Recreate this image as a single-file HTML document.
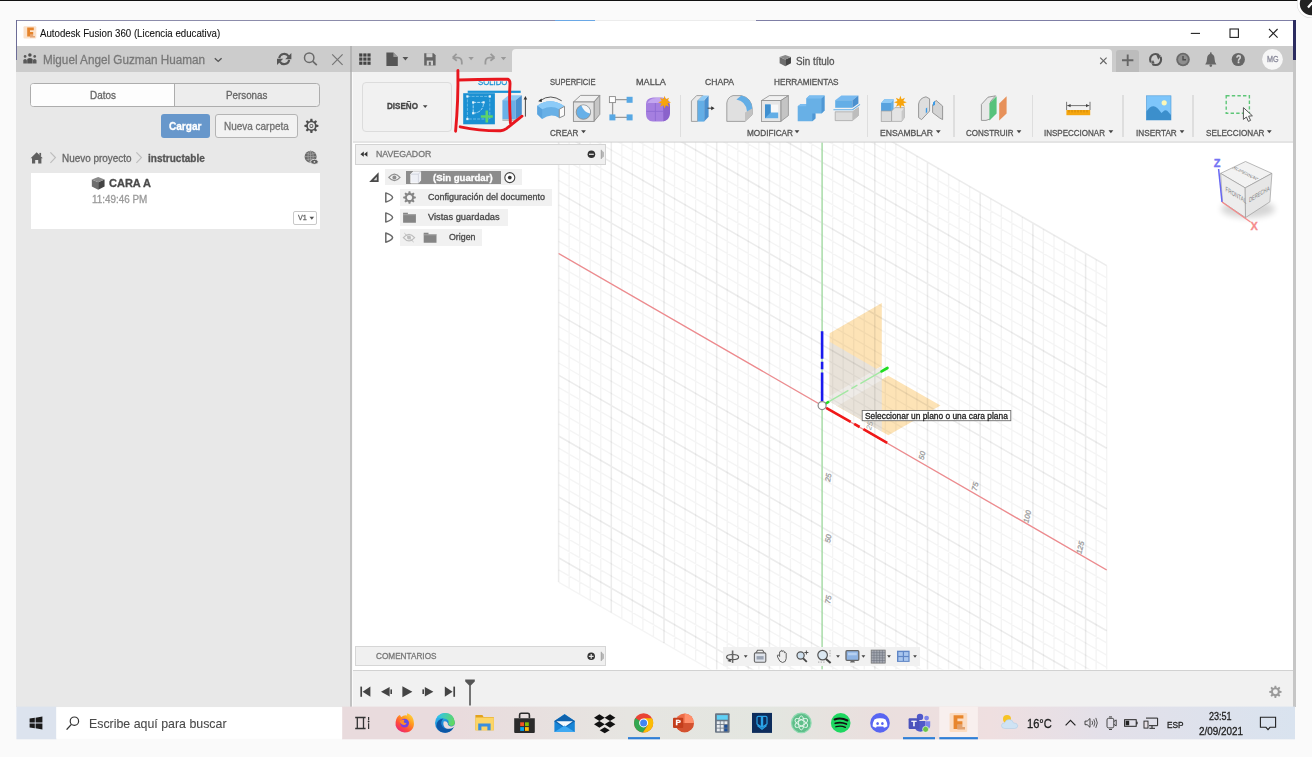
<!DOCTYPE html>
<html lang="es"><head><meta charset="utf-8"><title>Autodesk Fusion 360 (Licencia educativa)</title>
<style>
html,body{margin:0;padding:0}
body{width:1312px;height:757px;position:relative;overflow:hidden;background:#fafafa;font-family:"Liberation Sans",sans-serif}
.b{position:absolute;box-sizing:border-box}
.t{position:absolute;white-space:nowrap;transform-origin:0 50%;display:block;-webkit-text-stroke:0.3px currentColor}
svg{position:absolute;left:0;top:0}
#root{position:absolute;left:0;top:0;width:1312px;height:757px;overflow:hidden;filter:blur(0.45px)}
#txt{position:absolute;left:0;top:0;width:1312px;height:757px;}
</style></head><body>
<div id="root">
<div class="b" style="left:0px;top:0px;width:1312.00px;height:1.00px;background:#111;"></div>
<div class="b" style="left:16.4px;top:20.3px;width:1276.90px;height:25.70px;background:#ffffff;"></div>
<div class="b" style="left:16.4px;top:19.7px;width:538.60px;height:1.20px;background:#8c8cab;"></div>
<div class="b" style="left:555px;top:19.7px;width:40.00px;height:1.20px;background:#6aa8e6;"></div>
<div class="b" style="left:595px;top:19.7px;width:161.00px;height:1.20px;background:#ececec;"></div>
<div class="b" style="left:756px;top:19.7px;width:537.30px;height:1.20px;background:#7f7fa6;"></div>
<div class="b" style="left:16.4px;top:46px;width:1276.90px;height:26.20px;background:#cccccc;"></div>
<div class="b" style="left:15.7px;top:20.3px;width:1.20px;height:39.70px;background:#6c6c96;"></div>
<div class="b" style="left:16.4px;top:72.2px;width:334.60px;height:634.40px;background:#e8e8e8;"></div>
<div class="b" style="left:350.4px;top:46px;width:1.70px;height:26.20px;background:#b4b4b4;"></div>
<div class="b" style="left:350.4px;top:72.2px;width:1.70px;height:634.40px;background:#c2c2c2;"></div>
<div class="b" style="left:352.6px;top:72.2px;width:940.70px;height:68.80px;background:#f2f2f2;"></div>
<div class="b" style="left:352.6px;top:140.5px;width:940.70px;height:2.00px;background:#e4e4e4;"></div>
<div class="b" style="left:512px;top:48.6px;width:600.20px;height:23.90px;background:#f2f2f2;border-radius:4px 4px 0 0;"></div>
<div class="b" style="left:1116px;top:49.5px;width:23.00px;height:22.70px;background:#bcbcbc;border-radius:3px 3px 0 0;"></div>
<div class="b" style="left:352.6px;top:142.5px;width:940.70px;height:527.50px;background:#ffffff;"></div>
<div class="b" style="left:352.6px;top:669.6px;width:940.70px;height:1.80px;background:#d2d2d2;"></div>
<div class="b" style="left:352.6px;top:671.4px;width:940.70px;height:35.20px;background:#f1f1f1;"></div>
<div class="b" style="left:1293.3px;top:20.3px;width:2.70px;height:39.70px;background:#2c2c60;"></div>
<div class="b" style="left:1293.3px;top:60px;width:2.30px;height:646.60px;background:#c6c6c6;"></div>
<div class="b" style="left:30px;top:83px;width:290.40px;height:23.90px;background:#ededed;border:1.4px solid #adadad;border-radius:3.5px;"></div>
<div class="b" style="left:31.2px;top:84.2px;width:143.60px;height:21.50px;background:#fdfdfd;border-right:1.2px solid #adadad;border-radius:2px 0 0 2px;"></div>
<div class="b" style="left:161px;top:114.2px;width:48.70px;height:23.60px;background:#6797cb;border-radius:3px;"></div>
<div class="b" style="left:215px;top:114.2px;width:82.80px;height:23.60px;background:#f2f2f2;border:1px solid #b4b4b4;border-radius:3px;"></div>
<div class="b" style="left:30.7px;top:172.9px;width:289.70px;height:56.20px;background:#ffffff;"></div>
<div class="b" style="left:292.5px;top:210.7px;width:24.10px;height:14.00px;background:#ffffff;border:1px solid #c9c9c9;border-radius:2px;"></div>
<div class="b" style="left:361.5px;top:81.7px;width:90.50px;height:50.30px;background:#f1f1f1;border:1px solid #dcdcdc;border-radius:4px;"></div>
<div class="b" style="left:679.5px;top:95px;width:1.40px;height:41.50px;background:#dedede;"></div>
<div class="b" style="left:867.0px;top:95px;width:1.40px;height:41.50px;background:#dedede;"></div>
<div class="b" style="left:953.4px;top:95px;width:1.40px;height:41.50px;background:#dedede;"></div>
<div class="b" style="left:1031.5px;top:95px;width:1.40px;height:41.50px;background:#dedede;"></div>
<div class="b" style="left:1122.3px;top:95px;width:1.40px;height:41.50px;background:#dedede;"></div>
<div class="b" style="left:1192.2px;top:95px;width:1.40px;height:41.50px;background:#dedede;"></div>
<svg width="1312" height="757" viewBox="0 0 1312 757">
<defs><clipPath id="cv"><rect x="352.6" y="142.5" width="940.7" height="527.1"/></clipPath></defs>
<g clip-path="url(#cv)" fill="none">
<path d="M829.6 333.3L881.8 303.1V366L829.6 396.2Z" fill="#fde3b6" stroke="none"/>
<path d="M836 405.5L888.3 375.8L940.5 405.5L888.3 435.2Z" fill="#fde3b6" stroke="none"/>
<path d="M829.6 341.8L881.8 372V431.6L829.6 401.5Z" fill="#e8e2d9" stroke="none"/>
<path d="M829.6 396.2L881.8 366V380L837.4 405.9L829.6 401.5Z" fill="#eeebe7" stroke="none"/>
<path d="M569.14 -44.71V588.16M579.68 -38.62V594.24M590.22 -32.54V600.33M600.76 -26.45V606.41M621.84 -14.28V618.58M632.38 -8.20V624.67M642.92 -2.11V630.76M653.46 3.97V636.84M674.54 16.14V649.01M685.08 22.23V655.10M695.62 28.31V661.18M706.16 34.40V667.27M727.24 46.57V679.44M737.78 52.65V685.52M748.32 58.74V691.61M758.86 64.82V697.69M779.94 77.00V709.86M790.48 83.08V715.95M801.02 89.17V722.03M811.56 95.25V728.12M832.64 107.42V740.29M843.18 113.51V746.38M853.72 119.59V752.46M864.26 125.68V758.55M885.34 137.85V770.72M895.88 143.93V776.80M906.42 150.02V782.89M916.96 156.10V788.97M938.04 168.27V801.14M948.58 174.36V807.23M959.12 180.44V813.31M969.66 186.53V819.40M990.74 198.70V831.57M1001.28 204.79V837.65M1011.82 210.87V843.74M1022.36 216.96V849.82M1043.44 229.13V862.00M1053.98 235.21V868.08M1064.52 241.30V874.17M1075.06 247.38V880.25M1096.14 259.55V892.42M1106.68 265.64V898.51M558.60 -38.62L1106.68 277.81M558.60 -26.45L1106.68 289.98M558.60 -14.28L1106.68 302.15M558.60 -2.11L1106.68 314.32M558.60 22.23L1106.68 338.66M558.60 34.40L1106.68 350.83M558.60 46.57L1106.68 363.00M558.60 58.74L1106.68 375.17M558.60 83.08L1106.68 399.51M558.60 95.25L1106.68 411.69M558.60 107.42L1106.68 423.86M558.60 119.59L1106.68 436.03M558.60 143.93L1106.68 460.37M558.60 156.10L1106.68 472.54M558.60 168.27L1106.68 484.71M558.60 180.44L1106.68 496.88M558.60 204.79L1106.68 521.22M558.60 216.96L1106.68 533.39M558.60 229.13L1106.68 545.56M558.60 241.30L1106.68 557.73M558.60 265.64L1106.68 582.07M558.60 277.81L1106.68 594.24M558.60 289.98L1106.68 606.41M558.60 302.15L1106.68 618.58M558.60 326.49L1106.68 642.93M558.60 338.66L1106.68 655.10M558.60 350.83L1106.68 667.27M558.60 363.00L1106.68 679.44M558.60 387.34L1106.68 703.78M558.60 399.51L1106.68 715.95M558.60 411.69L1106.68 728.12M558.60 423.86L1106.68 740.29M558.60 448.20L1106.68 764.63M558.60 460.37L1106.68 776.80M558.60 472.54L1106.68 788.97M558.60 484.71L1106.68 801.14M558.60 509.05L1106.68 825.48M558.60 521.22L1106.68 837.65M558.60 533.39L1106.68 849.82M558.60 545.56L1106.68 862.00M558.60 569.90L1106.68 886.34M558.60 582.07L1106.68 898.51" stroke="#000" stroke-opacity="0.042" stroke-width="1.4"/>
<path d="M558.60 -50.80V582.07M611.30 -20.37V612.50M664.00 10.06V642.93M716.70 40.48V673.35M769.40 70.91V703.78M822.10 101.34V734.20M874.80 131.76V764.63M927.50 162.19V795.06M980.20 192.62V825.48M1032.90 223.04V855.91M1085.60 253.47V886.34M558.60 -50.80L1106.68 265.64M558.60 10.06L1106.68 326.49M558.60 70.91L1106.68 387.34M558.60 131.76L1106.68 448.20M558.60 192.62L1106.68 509.05M558.60 253.47L1106.68 569.90M558.60 314.32L1106.68 630.76M558.60 375.17L1106.68 691.61M558.60 436.03L1106.68 752.46M558.60 496.88L1106.68 813.31M558.60 557.73L1106.68 874.17" stroke="#000" stroke-opacity="0.075" stroke-width="1.6"/>
<path d="M822.10 142.5V669.6" stroke="#9bdc9b" stroke-width="1.2"/>
<path d="M558.60 253.47L1106.68 569.90" stroke="#f0868a" stroke-width="1.2"/>
<text x="869.3" y="428.2" font-family="Liberation Sans, sans-serif" font-style="italic" font-size="7.5" fill="#9a9a9a" stroke="none" text-anchor="middle" transform="rotate(-76 869.3 425.5)">25</text>
<path d="M827.6 402.4L884 369.9" stroke="#a3e8a3" stroke-width="1.4" stroke-dasharray="24 3.4 7 3.4 30"/>
<path d="M881.6 371.4L887.4 368" stroke="#22dd22" stroke-width="2.8" stroke-linecap="round"/>
<path d="M825 404L829 401.6" stroke="#22dd22" stroke-width="2.4"/>
<path d="M822.1 331.2V358.7M822.1 361.8V369.2M822.1 372.4V401" stroke="#1a1aee" stroke-width="2.6"/>
<path d="M826.1 407.9L850.7 421.9M854.2 423.9L859.6 427M863.4 429.2L887.2 442.8" stroke="#f01818" stroke-width="2.6"/>
<circle cx="822.1" cy="405.6" r="4" fill="#ffffff" stroke="#8a8a8a" stroke-width="1.2"/>
</g>
<rect x="862.2" y="410.5" width="148.6" height="10.2" fill="#ffffff" stroke="#6e6e6e" stroke-width="0.9"/>
<g>
<defs><filter id="vb" x="-30%" y="-60%" width="160%" height="220%"><feGaussianBlur stdDeviation="3.2"/></filter></defs><ellipse cx="1248" cy="209" rx="27" ry="9" fill="#000" opacity="0.16" filter="url(#vb)"/>
<path d="M1220.6 173.4L1245.5 161.5L1271.9 173.4L1245.2 187.9Z" fill="#f2f2f2" stroke="#9c9c9c" stroke-width="0.7"/>
<path d="M1220.6 173.4L1245.2 187.9L1245.5 217.6L1222.4 202Z" fill="#ededed" stroke="#9c9c9c" stroke-width="0.7"/>
<path d="M1245.2 187.9L1271.9 173.4L1269.9 201.8L1245.5 217.6Z" fill="#e6e6e6" stroke="#9c9c9c" stroke-width="0.7"/>
<path d="M1218.6 169L1222 202" stroke="#6666f2" stroke-width="1.5"/>
<path d="M1222 202L1250.5 222" stroke="#f48a8a" stroke-width="1.3"/>
</g>
</svg>
<div class="b" style="left:355px;top:144.4px;width:250.50px;height:20.40px;background:#f0f0f0;border:1px solid #d3d3d3;"></div>
<div class="b" style="left:385.2px;top:168.8px;width:136.70px;height:16.50px;background:#f0f0f0;"></div>
<div class="b" style="left:406.2px;top:170.7px;width:94.70px;height:13.20px;background:#8c8c8c;"></div>
<div class="b" style="left:400.3px;top:189.3px;width:151.70px;height:16.40px;background:#f1f1f1;"></div>
<div class="b" style="left:400.3px;top:209.3px;width:108.10px;height:16.40px;background:#f1f1f1;"></div>
<div class="b" style="left:400.3px;top:229.4px;width:82.20px;height:16.40px;background:#f1f1f1;"></div>
<div class="b" style="left:355px;top:646px;width:250.50px;height:20.40px;background:#f0f0f0;border:1px solid #d6d6d6;"></div>
<div class="b" style="left:723.4px;top:647px;width:197.00px;height:19.00px;background:#f1f1f1;"></div>
<svg width="1312" height="757" viewBox="0 0 1312 757">
<rect x="23.5" y="26.2" width="12.8" height="12.4" rx="1" fill="#fbe2cb"/>
<path d="M27.2 27.6H33.8V30.2H30V32H33.2V34.4H30V36.6H27.2Z" fill="#e5842c"/>
<path d="M30 34.4H33.2V36H35V37.4H30Z" fill="#d2691e" opacity=".5"/>
<path d="M1190.8 33.4H1200" stroke="#222" stroke-width="1.1"/>
<rect x="1230" y="29" width="8.4" height="8.4" fill="none" stroke="#222" stroke-width="1.1"/>
<path d="M1269 29L1277.6 37.6M1277.6 29L1269 37.6" stroke="#222" stroke-width="1.1"/>
<circle cx="1311.2" cy="3.8" r="14.3" fill="#d8d8d8"/><circle cx="1311.2" cy="3.8" r="13.8" fill="#fff"/><circle cx="1311.2" cy="3.8" r="11.4" fill="#222"/>
<path d="M1308 7.4L1312.4 2.4" stroke="#fff" stroke-width="2.2"/>
<circle cx="25.1" cy="56.4" r="1.35" fill="#5a5a5a"/>
<path d="M23.30 63.5V60.50Q23.30 58.90 25.10 58.90Q26.90 58.90 26.90 60.50V63.5Z" fill="#5a5a5a"/>
<circle cx="34.7" cy="56.4" r="1.35" fill="#5a5a5a"/>
<path d="M32.90 63.5V60.50Q32.90 58.90 34.70 58.90Q36.50 58.90 36.50 60.50V63.5Z" fill="#5a5a5a"/>
<circle cx="29.9" cy="55" r="1.75" fill="#4f4f4f"/>
<path d="M27.20 63.5V59.60Q27.20 58.00 29.90 58.00Q32.60 58.00 32.60 59.60V63.5Z" fill="#4f4f4f"/>
<path d="M214.8 58.2L218.2 61.4L221.6 58.2" fill="none" stroke="#555" stroke-width="1.4"/>
<path d="M279.2 58.2A5.1 5.1 0 0 1 288.6 56.4" fill="none" stroke="#555" stroke-width="2.1"/>
<path d="M289.2 59.8A5.1 5.1 0 0 1 279.8 61.6" fill="none" stroke="#555" stroke-width="2.1"/>
<path d="M291.4 53V59.2H285.2Z" fill="#555"/>
<path d="M277 65V58.8H283.2Z" fill="#555"/>
<circle cx="309.2" cy="57.7" r="4.7" fill="none" stroke="#6a6a6a" stroke-width="1.5"/><path d="M312.6 61.2L316.8 65.2" stroke="#6a6a6a" stroke-width="1.7"/>
<path d="M332.2 54.4L342.6 64.8M342.6 54.4L332.2 64.8" stroke="#757575" stroke-width="1.2"/>
<rect x="359.2" y="53.4" width="3.2" height="3.2" fill="#444"/>
<rect x="363.3" y="53.4" width="3.2" height="3.2" fill="#444"/>
<rect x="367.4" y="53.4" width="3.2" height="3.2" fill="#444"/>
<rect x="359.2" y="57.5" width="3.2" height="3.2" fill="#444"/>
<rect x="363.3" y="57.5" width="3.2" height="3.2" fill="#444"/>
<rect x="367.4" y="57.5" width="3.2" height="3.2" fill="#444"/>
<rect x="359.2" y="61.6" width="3.2" height="3.2" fill="#444"/>
<rect x="363.3" y="61.6" width="3.2" height="3.2" fill="#444"/>
<rect x="367.4" y="61.6" width="3.2" height="3.2" fill="#444"/>
<path d="M386.4 52.6H393.4L397.8 57V66H386.4Z" fill="#555"/><path d="M393.4 52.6V57H397.8Z" fill="#999"/>
<path d="M402.50 57.10H408.30L405.40 60.50Z" fill="#555"/>
<path d="M424.2 53.2H433.6L435.6 55.2V65.4H424.2Z" fill="#666"/><rect x="426.4" y="53.2" width="6" height="4" fill="#cfcfcf"/><rect x="426.8" y="60.6" width="6.2" height="4.8" fill="#cfcfcf"/><rect x="428.8" y="61.8" width="2" height="3.6" fill="#666"/>
<path d="M452.6 57.6L456.6 53.8M452.6 57.6L456.8 60.8M452.8 57.6H458Q461.6 57.8 461.8 62V64.6" fill="none" stroke="#999" stroke-width="1.8"/>
<path d="M468.40 57.00H473.80L471.10 60.20Z" fill="#999"/>
<path d="M494.6 57.6L490.6 53.8M494.6 57.6L490.4 60.8M494.4 57.6H489.2Q485.6 57.8 485.4 62V64.6" fill="none" stroke="#999" stroke-width="1.8"/>
<path d="M500.80 57.00H506.20L503.50 60.20Z" fill="#999"/>
<path d="M779.63 57.03L785.30 59.55V66.27L779.63 63.33Z" fill="#6e6e6e"/>
<path d="M790.97 57.03L785.30 59.55V66.27L790.97 63.33Z" fill="#444"/>
<path d="M779.63 57.03L785.30 54.93L790.97 57.03L785.30 59.55Z" fill="#8a8a8a"/>
<path d="M1100.2 57.6L1106.6 64M1106.6 57.6L1100.2 64" stroke="#666" stroke-width="1.1"/>
<path d="M1122 60.3H1133.4M1127.7 54.6V66" stroke="#666" stroke-width="1.9"/>
<circle cx="1155.6" cy="59.5" r="5.5" fill="none" stroke="#555" stroke-width="2.1"/>
<path d="M1157 58L1161.4 51.4L1164.4 55.6Z" fill="#cccccc"/><path d="M1153.6 61.6L1150.6 67.2L1147.4 63.8Z" fill="#cccccc"/>
<path d="M1156.2 54.6L1161 55.6L1158.2 59.8Z" fill="#555"/><path d="M1151 63.4L1154.6 63.2L1153 60Z" fill="#555"/>
<circle cx="1183" cy="59.5" r="6.8" fill="#6a6a6a"/><circle cx="1183" cy="59.5" r="4.9" fill="#8e8e8e"/><path d="M1183 56V59.8H1186" fill="none" stroke="#4e4e4e" stroke-width="1.4"/>
<path d="M1205.2 64.4Q1207 62.6 1207 59Q1207.2 54.4 1210.8 53.6Q1214.4 54.4 1214.6 59Q1214.6 62.6 1216.4 64.4Z" fill="#666"/><circle cx="1210.8" cy="65.6" r="1.3" fill="#666"/><circle cx="1210.8" cy="53.2" r="0.9" fill="#666"/>
<circle cx="1238.3" cy="59.5" r="6.6" fill="#666"/>
<circle cx="1272.5" cy="59.3" r="10.4" fill="#f6f6f6"/>
<path d="M318.43 124.93L318.43 126.87L316.34 127.20L315.81 128.48L317.06 130.19L315.69 131.56L313.98 130.31L312.70 130.84L312.37 132.93L310.43 132.93L310.10 130.84L308.82 130.31L307.11 131.56L305.74 130.19L306.99 128.48L306.46 127.20L304.37 126.87L304.37 124.93L306.46 124.60L306.99 123.32L305.74 121.61L307.11 120.24L308.82 121.49L310.10 120.96L310.43 118.87L312.37 118.87L312.70 120.96L313.98 121.49L315.69 120.24L317.06 121.61L315.81 123.32L316.34 124.60Z" fill="#4e4e4e"/><circle cx="311.4" cy="125.9" r="3.55" fill="#e8e8e8"/><circle cx="311.4" cy="125.9" r="1.99" fill="#4e4e4e"/><circle cx="311.4" cy="125.9" r="1.14" fill="#e8e8e8"/>
<g transform="translate(0 0.7)"><path d="M30.6 157.6L36.7 151.6L42.8 157.6H41.4V162.8H38.2V159.2H35.2V162.8H32V157.6Z" fill="#606060"/><rect x="39.4" y="152.2" width="1.7" height="3" fill="#606060"/></g>
<path d="M50.4 152.4L55.4 157.6L50.4 162.8" fill="none" stroke="#bdbdbd" stroke-width="1.2"/>
<path d="M136.4 152.4L141.4 157.6L136.4 162.8" fill="none" stroke="#bdbdbd" stroke-width="1.2"/>
<circle cx="310.6" cy="156.8" r="6" fill="#6a6a6a"/><path d="M305 156.6H316.2M310.6 151V162.2M306.4 153.4Q310.6 155.4 314.8 153.4M306.4 159.8Q310.6 157.8 314.8 159.8" stroke="#a8a8a8" stroke-width="0.7" fill="none"/><ellipse cx="310.6" cy="156.6" rx="2.6" ry="5.6" fill="none" stroke="#a8a8a8" stroke-width="0.7"/>
<ellipse cx="314.4" cy="161.8" rx="3.8" ry="2.5" fill="#5a5a5a" stroke="#e8e8e8" stroke-width="0.8"/><circle cx="314.4" cy="161.8" r="0.9" fill="#ddd"/>
<path d="M91.83 179.39L98.20 182.22V189.77L91.83 186.47Z" fill="#6e6e6e"/>
<path d="M104.57 179.39L98.20 182.22V189.77L104.57 186.47Z" fill="#444"/>
<path d="M91.83 179.39L98.20 177.03L104.57 179.39L98.20 182.22Z" fill="#8a8a8a"/>
<path d="M309.50 216.70H314.10L311.80 219.70Z" fill="#555"/>
<path d="M360.4 151.6L363.8 154.2L360.4 156.8ZM364 151.6L367.4 154.2L364 156.8Z" fill="#333" transform="rotate(180 363.9 154.2)"/>
<circle cx="591.4" cy="154.3" r="3.8" fill="#333"/><rect x="589" y="153.7" width="4.8" height="1.2" fill="#e8e8e8"/>
<path d="M601 149.8V159L604 156.6V152.2Z" fill="#b9b9b9"/><path d="M601.2 149.8V159" stroke="#999" stroke-width="0.7"/>
<path d="M369.2 182H378.6V172.2Z" fill="#4a4a4a"/><path d="M373.6 180.2H376.8V176.8Z" fill="#d8d8d8"/>
<path d="M388.79999999999995 177.4Q394.4 170.8 400.0 177.4Q394.4 184.0 388.79999999999995 177.4Z" fill="none" stroke="#8e8e8e" stroke-width="1.2"/><circle cx="394.4" cy="177.4" r="2" fill="#8e8e8e"/>
<path d="M410.8 174.2L413 171.8H420.6V180.4L418.4 183H410.8Z" fill="#eef0f6" stroke="#fff" stroke-width="0.8"/><path d="M410.8 174.2H418.4V183M418.4 174.2L420.6 171.8" fill="none" stroke="#c9ccd6" stroke-width="0.7"/>
<circle cx="509.8" cy="177.6" r="5" fill="#fff" stroke="#444" stroke-width="1.1"/><circle cx="509.8" cy="177.6" r="1.9" fill="#333"/>
<path d="M385.8 192.9V202.1Q392.2 199.9 392.6 197.5Q392.2 195.1 385.8 192.9Z" fill="#fff" stroke="#6a6a6a" stroke-width="1.5" stroke-linejoin="round"/>
<path d="M385.8 212.9V222.1Q392.2 219.9 392.6 217.5Q392.2 215.1 385.8 212.9Z" fill="#fff" stroke="#6a6a6a" stroke-width="1.5" stroke-linejoin="round"/>
<path d="M385.8 233.0V242.2Q392.2 240.0 392.6 237.6Q392.2 235.2 385.8 233.0Z" fill="#fff" stroke="#6a6a6a" stroke-width="1.5" stroke-linejoin="round"/>
<path d="M415.84 196.63L415.84 198.37L413.96 198.67L413.48 199.83L414.60 201.37L413.37 202.60L411.83 201.48L410.67 201.96L410.37 203.84L408.63 203.84L408.33 201.96L407.17 201.48L405.63 202.60L404.40 201.37L405.52 199.83L405.04 198.67L403.16 198.37L403.16 196.63L405.04 196.33L405.52 195.17L404.40 193.63L405.63 192.40L407.17 193.52L408.33 193.04L408.63 191.16L410.37 191.16L410.67 193.04L411.83 193.52L413.37 192.40L414.60 193.63L413.48 195.17L413.96 196.33Z" fill="#858585"/><circle cx="409.5" cy="197.5" r="2.56" fill="#f1f1f1"/>
<path d="M403.1 212.7H407.9V214.1H415.9V222.7H403.1Z" fill="#858585"/><path d="M403.1 214.7H415.9" stroke="#b3b3b3" stroke-width="0.8"/>
<path d="M423.70000000000005 232.8H428.5V234.20000000000002H436.5V242.8H423.70000000000005Z" fill="#858585"/><path d="M423.70000000000005 234.8H436.5" stroke="#b3b3b3" stroke-width="0.8"/>
<path d="M403.4 237.6Q409 231.0 414.6 237.6Q409 244.2 403.4 237.6Z" fill="none" stroke="#bdbdbd" stroke-width="1.2"/><circle cx="409" cy="237.6" r="2" fill="#bdbdbd"/>
<path d="M404.4 233.2L413.6 242" stroke="#bdbdbd" stroke-width="1"/>
<circle cx="591.2" cy="656.3" r="3.8" fill="#333"/><path d="M588.8 656.3H593.6M591.2 653.9V658.7" stroke="#e8e8e8" stroke-width="1.2"/>
<path d="M601 651.8V661L604 658.6V654.2Z" fill="#b9b9b9"/><path d="M601.2 651.8V661" stroke="#999" stroke-width="0.7"/>
<path d="M361.2 686.6V696.8" stroke="#444" stroke-width="1.7"/><path d="M370.4 686.6V696.8L362.6 691.7Z" fill="#444"/>
<path d="M389.6 687V696.4L381 691.7Z" fill="#444"/><rect x="390.4" y="689.4" width="1.6" height="4.6" fill="#444"/>
<path d="M402.4 686.2V697.2L412.4 691.7Z" fill="#444"/>
<path d="M424.8 687V696.4L433.4 691.7Z" fill="#444"/><rect x="422.4" y="689.4" width="1.6" height="4.6" fill="#444"/>
<path d="M454.2 686.6V696.8" stroke="#444" stroke-width="1.7"/><path d="M444.8 686.6V696.8L452.6 691.7Z" fill="#444"/>
<path d="M465.2 679.6H474.8V681.6L470.8 685.6V705.4H469.2V685.6L465.2 681.6Z" fill="#555"/>
<path d="M1281.54 690.96L1281.54 692.64L1279.72 692.93L1279.25 694.05L1280.34 695.55L1279.15 696.74L1277.65 695.65L1276.53 696.12L1276.24 697.94L1274.56 697.94L1274.27 696.12L1273.15 695.65L1271.65 696.74L1270.46 695.55L1271.55 694.05L1271.08 692.93L1269.26 692.64L1269.26 690.96L1271.08 690.67L1271.55 689.55L1270.46 688.05L1271.65 686.86L1273.15 687.95L1274.27 687.48L1274.56 685.66L1276.24 685.66L1276.53 687.48L1277.65 687.95L1279.15 686.86L1280.34 688.05L1279.25 689.55L1279.72 690.67Z" fill="#9a9a9a"/><circle cx="1275.4" cy="691.8" r="2.48" fill="#f1f1f1"/>
<rect x="467.7" y="90.7" width="53" height="2.2" fill="#1b93d6"/>
<rect x="463.2" y="93.2" width="31.7" height="31.1" fill="#1b90d2"/>
<rect x="467.4" y="96.4" width="22.4" height="22.6" fill="none" stroke="#6fbde9" stroke-width="0.9" stroke-dasharray="3 1.2"/>
<rect x="466.29999999999995" y="95.30000000000001" width="2.2" height="2.2" fill="#e6f3fb"/>
<rect x="488.7" y="95.30000000000001" width="2.2" height="2.2" fill="#e6f3fb"/>
<rect x="466.29999999999995" y="117.9" width="2.2" height="2.2" fill="#e6f3fb"/>
<path d="M473.2 102.4H483.6Q483.2 112.6 473.2 113.2Z" fill="none" stroke="#a9d9f4" stroke-width="1" stroke-dasharray="3 1"/>
<rect x="472.09999999999997" y="101.30000000000001" width="2.2" height="2.2" fill="#e6f3fb"/>
<rect x="482.5" y="101.30000000000001" width="2.2" height="2.2" fill="#e6f3fb"/>
<rect x="472.09999999999997" y="112.10000000000001" width="2.2" height="2.2" fill="#e6f3fb"/>
<path d="M486.8 110.4V122.6M480.8 116.5H492.8" stroke="#5fd36a" stroke-width="2.6"/>
<path d="M502.4 100.2L508.6 95.2H521.8L515.6 100.2Z" fill="#8fcaf5"/>
<path d="M502.4 100.2H515.6V119.4H502.4Z" fill="#6ab0e8"/>
<path d="M515.6 100.2L521.8 95.2V114.6L515.6 119.4Z" fill="#4a90cf"/>
<rect x="502.4" y="119.4" width="13.2" height="1.6" fill="#b9b9b9"/>
<path d="M525.4 98V116.6" stroke="#333" stroke-width="0.9"/><path d="M523.6 99.6L525.4 96L527.2 99.6Z" fill="#333"/>
<path d="M537.3 105.7L537.3 114.2L542.2 119.1Q550.7 112.4 559.3 117.9L564.5 115.5V106.3Q550.1 96.4 537.3 105.7Z" fill="#68b0e6"/>
<path d="M537.3 105.7Q550.1 96.4 564.5 106.3L559.3 109.3Q551.3 104.6 542.2 109.3Z" fill="#8ccbf8"/>
<path d="M537.3 105.7L542.2 109.3V119.1L537.3 114.2Z" fill="#5aa4de"/>
<path d="M559.3 109.3L564.5 106.3V115.5L559.3 117.9Z" fill="#fafafa" stroke="#8e8e8e" stroke-width="1"/>
<path d="M540.6 100.4Q550.4 93.4 561.7 100.8" fill="none" stroke="#444" stroke-width="0.9"/><path d="M538.2 101.2L541.6 98.6L541.8 102Z" fill="#222"/>
<path d="M573.4 102L580.6 95.4H599.8L594 102Z" fill="#f1f1f1" stroke="#8e8e8e" stroke-width="0.9"/>
<path d="M594 102L599.8 95.4V114.4L594 121.4Z" fill="#c6c6c6" stroke="#8e8e8e" stroke-width="0.9"/>
<rect x="573.4" y="102" width="20.6" height="19.4" fill="#e3e3e3" stroke="#8e8e8e" stroke-width="0.9"/>
<circle cx="583.4" cy="112.1" r="7.2" fill="#66b0e8" stroke="#8e8e8e" stroke-width="0.9"/><path d="M581.4 105.6A6.8 6.8 0 0 1 590 113.6Q583.6 112 581.4 105.6Z" fill="#f6f6f6"/>
<path d="M612.6 99.6H629M612.6 99.6V117.4M612.6 117.4H629" fill="none" stroke="#9a9a9a" stroke-width="1.3"/>
<rect x="609.4" y="96.6" width="6" height="6" fill="#fff" stroke="#8a8a8a" stroke-width="0.9"/>
<rect x="626.6" y="96.8" width="6" height="6" fill="#57a8e4"/>
<rect x="609.4" y="114.4" width="6" height="6" fill="#57a8e4"/>
<rect x="626.6" y="114.4" width="6" height="6" fill="#57a8e4"/>
<path d="M646 104Q646 98 653 97.4H662Q670 98 670 105V113Q669.4 121 662 121.6H653Q646 121 646 114Z" fill="#a57fe0"/>
<path d="M663 100Q670 101 670 107V113Q669.4 120 663.4 121.4Z" fill="#8a62cb"/>
<path d="M647 104Q649 98.4 656 98H663L661 103H648Z" fill="#c3a6ef"/>
<path d="M655.4 103V121M646.4 111.4H663" stroke="#8f6cd2" stroke-width="0.9"/>
<path d="M664.60 95.80L665.82 99.24L669.13 97.67L667.56 100.98L671.00 102.20L667.56 103.42L669.13 106.73L665.82 105.16L664.60 108.60L663.38 105.16L660.07 106.73L661.64 103.42L658.20 102.20L661.64 100.98L660.07 97.67L663.38 99.24Z" fill="#f7a40c"/>
<path d="M691.4 101L696.6 95.6H703L697.6 101V121.4H691.4Z" fill="#e9e9e9" stroke="#8e8e8e" stroke-width="0.8"/>
<path d="M697.6 100.4L702.8 95.6H708.6L703.8 100.4Z" fill="#8fcaf5"/><rect x="697.6" y="100.4" width="6.6" height="21.2" fill="#63aee6"/><path d="M704.2 100.4L708.6 95.6V116.8L704.2 121.6Z" fill="#4a90cf"/>
<path d="M707.6 108.2H712.4" stroke="#444" stroke-width="1"/><path d="M711.2 106.2L714.6 108.2L711.2 110.2Z" fill="#333"/>
<path d="M726.8 121.4V103Q727.6 97 733 95.6H741.4Q751.4 98 752.2 108.4V114.6L745 121.4Z" fill="#e0e0e0" stroke="#8e8e8e" stroke-width="0.8"/>
<path d="M745 121.4V112.6L752.2 108V114.6Z" fill="#c2c2c2"/>
<path d="M741.4 95.6Q751.4 98 752.2 108.4L747 111.4Q746.2 101.6 736.4 99.6Z" fill="#63aee6"/>
<path d="M761.4 100.6L769.4 95.6H788.4L780.8 100.6Z" fill="#f1f1f1" stroke="#8e8e8e" stroke-width="0.8"/>
<path d="M780.8 100.6L788.4 95.6V115.6L780.8 121.4Z" fill="#c4c4c4" stroke="#8e8e8e" stroke-width="0.8"/>
<rect x="761.4" y="100.6" width="19.4" height="20.8" fill="#e6e6e6" stroke="#8e8e8e" stroke-width="0.8"/>
<rect x="765" y="104.6" width="13.2" height="13.6" fill="#f8f8f8"/>
<path d="M765 104.6H770.6V112.6H778.2V118.2H765Z" fill="#63aee6"/><path d="M765 104.6H770.6V112.6L765 118.2Z" fill="#3f8fcf"/>
<path d="M797.7 106.3L800.7 103.9H806.2V98.4L809.3 95.6H824.5V110.6L821.5 113.4H815.4V118.5L812.3 121.2H797.7Z" fill="#68b0e6"/>
<path d="M821.5 98.4L824.5 95.6V110.6L821.5 113.4Z" fill="#4f97d4"/><path d="M812.3 113.4H815.4V118.5L812.3 121.2Z" fill="#4f97d4"/>
<path d="M806.2 98.4L809.3 95.6H824.5L821.5 98.4Z" fill="#7cbdf0"/><path d="M797.7 106.3L800.7 103.9H806.2V106.3Z" fill="#7cbdf0"/>
<path d="M835.2 100.2L841.4 95.6H858.4L852.4 100.2Z" fill="#78baf0"/><rect x="835.2" y="100.2" width="17.2" height="7.6" fill="#63aee6"/><path d="M852.4 100.2L858.4 95.6V103.6L852.4 107.8Z" fill="#4a90cf"/>
<path d="M835.2 111.8H852.4L858.4 107.6V115.6L852.4 120.6H835.2Z" fill="#dcdcdc" stroke="#a0a0a0" stroke-width="0.7"/><path d="M852.4 111.8L858.4 107.6V115.6L852.4 120.6Z" fill="#bdbdbd"/>
<path d="M833.4 109.8H852.6L860 104.4" fill="none" stroke="#63aee6" stroke-width="1.1"/>
<path d="M881.2 103L884.4 99.2H893.6V111H881.2Z" fill="#63aee6"/><path d="M881.2 103H891V111H881.2Z" fill="#57a2de"/><path d="M881.2 103L884.4 99.2H894L891 103Z" fill="#8fcaf5"/>
<rect x="881.2" y="111" width="10.4" height="10.4" fill="#dcdcdc" stroke="#a0a0a0" stroke-width="0.7"/>
<path d="M891.6 111L894.8 107.6H904.4V117.6L901.6 121.4H891.6Z" fill="#e4e4e4" stroke="#a0a0a0" stroke-width="0.7"/><path d="M901.6 111.4L904.4 107.6V117.6L901.6 121.4Z" fill="#c9c9c9"/>
<path d="M900.40 95.80L901.62 99.24L904.93 97.67L903.36 100.98L906.80 102.20L903.36 103.42L904.93 106.73L901.62 105.16L900.40 108.60L899.18 105.16L895.87 106.73L897.44 103.42L894.00 102.20L897.44 100.98L895.87 97.67L899.18 99.24Z" fill="#f7a40c"/>
<path d="M918.6 104Q919.6 98 926 96.8L929.6 98.8V111L921.6 119.6L918.6 117.6Z" fill="#dedede" stroke="#8e8e8e" stroke-width="0.9"/>
<path d="M932.6 105L936 100.4L942.6 106V119.6L939.4 117.8L932.6 112.6Z" fill="#d4d4d4" stroke="#8e8e8e" stroke-width="0.9"/>
<path d="M925.8 108.6L927.2 107.4V112L925.8 113.4Z" fill="#3a9be8"/><path d="M933 102.6L935 100.8V104.8L933 106Z" fill="#3a9be8"/>
<path d="M981.4 104.4L988 97.2L995.6 95.8L990.6 101.4V118.8L986 120.4H981.4Z" fill="#e8e8e8" stroke="#909090" stroke-width="0.9"/>
<path d="M989.4 103.2L996.6 96.2V113.4L989.4 120.4Z" fill="#57c27b"/>
<path d="M999.2 103.6L1006.6 96.2V113.6L999.2 120.6Z" fill="#e7915a"/>
<path d="M1066.6 101.8V110M1090 101.8V110M1067.2 105.6H1089.4" stroke="#555" stroke-width="0.8" fill="none"/><path d="M1067.4 105.6L1070.6 104V107.2ZM1089.2 105.6L1086 104V107.2Z" fill="#444"/>
<rect x="1066.4" y="110" width="23.8" height="5.2" fill="#f5a60f"/><path d="M1069 110V112.4M1072 110V112.4M1075 110V112.4M1078 110V112.4M1081 110V112.4M1084 110V112.4M1087 110V112.4" stroke="#b87400" stroke-width="0.6"/>
<rect x="1146.4" y="95.8" width="24.6" height="24.2" fill="#7ec6fb" stroke="#4f9bd8" stroke-width="0.6"/>
<path d="M1146.4 111.4Q1150 106 1153.6 106.2Q1157 106.4 1161.4 113L1164.4 110.6Q1165.8 109.6 1167.2 110.8L1171 115V120H1146.4Z" fill="#3c8fcc"/>
<circle cx="1164.2" cy="102.8" r="2.6" fill="#fbf7b8"/>
<rect x="1226.2" y="95.8" width="23.2" height="17.4" fill="none" stroke="#5ec678" stroke-width="1.4" stroke-dasharray="3.4 2.2"/>
<path d="M1243.4 107.6V119.4L1246.4 117L1248.4 121.4L1250.6 120.4L1248.6 116.2L1252.4 115.8Z" fill="#fafafa" stroke="#555" stroke-width="1"/>
<path d="M581.10 130.30H585.90L583.50 133.30Z" fill="#444"/>
<path d="M794.60 130.30H799.40L797.00 133.30Z" fill="#444"/>
<path d="M935.90 130.30H940.70L938.30 133.30Z" fill="#444"/>
<path d="M1016.60 130.30H1021.40L1019.00 133.30Z" fill="#444"/>
<path d="M1108.50 130.30H1113.30L1110.90 133.30Z" fill="#444"/>
<path d="M1179.60 130.30H1184.40L1182.00 133.30Z" fill="#444"/>
<path d="M1266.90 130.30H1271.70L1269.30 133.30Z" fill="#444"/>
<path d="M422.90 105.20H427.50L425.20 108.00Z" fill="#444"/>
<ellipse cx="732.6" cy="657.1" rx="6" ry="2.6" fill="none" stroke="#555" stroke-width="1.2"/><path d="M732.6 650.5V662.9" stroke="#666" stroke-width="1.6"/><path d="M727.4 661.1L730.6 658.7L730.8 661.9Z" fill="#444"/>
<path d="M743.80 655.30H747.60L745.70 657.70Z" fill="#444"/>
<rect x="754.4" y="652.9" width="11.4" height="9.4" rx="1.2" fill="#dfe3ea" stroke="#666" stroke-width="1.1"/><rect x="756.6" y="656.1" width="7" height="3.4" fill="#9aa3b3"/><path d="M756 652.7L757.6 650.3H762.6L764.2 652.7" fill="none" stroke="#666" stroke-width="1.1"/>
<path d="M777.6 657.1Q776.6 654.5 778.6 654.9L779.6 656.5V651.9Q780.2 650.7 781 651.9V650.9Q781.8 649.7 782.6 650.9V651.5Q783.6 650.3 784.4 651.5V652.7Q785.6 651.9 786.2 653.1V658.5Q786 662.3 782.6 662.5Q779.6 662.5 777.6 657.1Z" fill="#efefef" stroke="#555" stroke-width="0.9"/>
<circle cx="800.6" cy="655.5" r="3.6" fill="#cfe0ee" stroke="#555" stroke-width="1.2"/><path d="M803.2 658.3L806.8 661.9" stroke="#444" stroke-width="1.8"/><path d="M806.4 650.5V654.5M804.4 652.5H808.4" stroke="#444" stroke-width="0.9"/>
<circle cx="822.6" cy="655.1" r="4.8" fill="#dbe8f2" stroke="#555" stroke-width="1.2"/><path d="M826 658.9L830.6 663.1" stroke="#444" stroke-width="2"/><path d="M818 662.1H825M830 650.1V656.5" stroke="#888" stroke-width="0.7" stroke-dasharray="1.4 1.2"/>
<path d="M836.10 655.30H839.90L838.00 657.70Z" fill="#444"/>
<rect x="846" y="650.7" width="12.8" height="9.6" rx="1" fill="#8fb4e4" stroke="#666" stroke-width="1.3"/><rect x="848" y="652.7" width="8.8" height="2.6" fill="#b6d0f0"/><path d="M850 662.5H855L854 660.5H851Z" fill="#666"/>
<path d="M861.50 655.30H865.30L863.40 657.70Z" fill="#444"/>
<rect x="871.2" y="650.1" width="14" height="13" fill="#a5a9b2" stroke="#777" stroke-width="0.8"/><path d="M874 650.1V663.1M876.8 650.1V663.1M879.6 650.1V663.1M882.4 650.1V663.1M871.2 652.7H885.2M871.2 655.3H885.2M871.2 657.9H885.2M871.2 660.5H885.2" stroke="#6f7480" stroke-width="0.6"/>
<path d="M887.10 655.30H890.90L889.00 657.70Z" fill="#444"/>
<rect x="897" y="650.7" width="12.6" height="11.2" fill="#5f86c6"/><rect x="898.4" y="652.1" width="4.4" height="3.8" fill="#a9c6ee"/><rect x="904" y="652.1" width="4.4" height="3.8" fill="#a9c6ee"/><rect x="898.4" y="657.1" width="4.4" height="3.8" fill="#a9c6ee"/><rect x="904" y="657.1" width="4.4" height="3.8" fill="#a9c6ee"/>
<path d="M913.10 655.30H916.90L915.00 657.70Z" fill="#444"/>
<defs><linearGradient id="tbg" x1="0" x2="1" y1="0" y2="0"><stop offset="0" stop-color="#e9dbdd"/><stop offset="0.12" stop-color="#e9dbdd"/><stop offset="0.30" stop-color="#e6e5e1"/><stop offset="0.45" stop-color="#e3e6e0"/><stop offset="0.56" stop-color="#eadfde"/><stop offset="0.68" stop-color="#efdfe0"/><stop offset="0.80" stop-color="#e3e0e9"/><stop offset="1" stop-color="#d9e3ef"/></linearGradient></defs>
<rect x="342" y="706.6" width="953" height="32.7" fill="url(#tbg)"/>
<rect x="16.4" y="706.6" width="40.0" height="32.7" fill="#dce3ee"/>
<rect x="56.4" y="707.2" width="285.8" height="31.5" fill="#ffffff"/>
<path d="M29.6 718.6L34.8 717.8V722.6H29.6ZM35.6 717.7L42.4 716.6V722.6H35.6ZM29.6 723.4H34.8V728.2L29.6 727.4ZM35.6 723.4H42.4V729.4L35.6 728.3Z" fill="#1a1a1a"/>
<circle cx="74.4" cy="721.2" r="4.2" fill="none" stroke="#333" stroke-width="1.2"/><path d="M71.4 724.4L66.6 729.6" stroke="#333" stroke-width="1.4"/>
<path d="M355.2 717.5H365.6M355.2 728.5H365.6M357.3 717.5V728.5M363.5 717.5V728.5" fill="none" stroke="#333" stroke-width="1.3"/><path d="M368.6 716.9V719.9M368.6 723.3V729.1" stroke="#333" stroke-width="1.2"/><circle cx="368.6" cy="721.5" r="0.9" fill="#222"/>
<defs><linearGradient id="ffg" x1="0.85" y1="0.05" x2="0.2" y2="0.95"><stop offset="0" stop-color="#ffd43a"/><stop offset="0.35" stop-color="#ff9a1f"/><stop offset="0.7" stop-color="#ff4a3a"/><stop offset="1" stop-color="#e8267a"/></linearGradient></defs>
<path d="M396.2 719.5Q397.6 715.5 400 714.9Q400.4 716.3 401.4 716.9Q404 714.6999999999999 407 715.5Q407.4 714.3 406.8 713.3Q411.4 714.3 413.2 718.9Q414.8 723.9 413 727.9Q410.4 732.5 404.6 732.5Q397.4 731.9 395.6 725.5Q395.2 722.3 396.2 719.5Z" fill="url(#ffg)"/>
<circle cx="404.6" cy="723.1" r="4.4" fill="#7a3fe0"/><circle cx="405.6" cy="722.3" r="2.6" fill="#5a4fe8"/><path d="M399.6 721.3Q401.6 719.1 404.6 719.9Q403.4 721.1 404 722.5Q405.4 723.3 406.6 722.6999999999999Q406.4 724.6999999999999 404.4 725.1Q401 725.1 399.6 721.3Z" fill="#ff8a2a"/>
<defs><linearGradient id="edg" x1="0.1" y1="0.1" x2="0.6" y2="1"><stop offset="0" stop-color="#36c3f2"/><stop offset="0.55" stop-color="#1b86d6"/><stop offset="1" stop-color="#1466b8"/></linearGradient><linearGradient id="edg2" x1="0" y1="0.3" x2="1" y2="0.6"><stop offset="0" stop-color="#33c3e8"/><stop offset="1" stop-color="#62d95e"/></linearGradient></defs>
<circle cx="444.9" cy="722.9" r="9.9" fill="url(#edg)"/>
<path d="M437 716.9Q441 712.9 446 713.1Q453.6 713.9 454.8 721.9Q455 725.3 452 725.9Q448.6 726.1 448.4 723.5Q449.4 720.3 446 718.9Q441 717.9 437 716.9Z" fill="url(#edg2)"/>
<path d="M436.4 725.9Q436.6 719.3 443.4 718.5Q440.6 721.3 441.4 724.5Q443 729.5 448.6 729.3Q451.6 728.9 453.4 727.3Q451 732.5 445.6 732.6999999999999Q438 732.3 436.4 725.9Z" fill="#0d57a6"/>
<path d="M443.6 721.5Q446.6 720.5 447.8 723.3Q447.6 725.9 451 726.5Q454.6 726.1 454.8 723.5Q455.4 725.9 453.4 727.5Q450 729.5 446.4 728.5Q442.4 726.6999999999999 443.6 721.5Z" fill="#e9dcdd"/>
<path d="M475.4 715.1H482.4L483.6 716.9H493.8V730.3H475.4Z" fill="#e2a21e"/><rect x="475.4" y="717.5" width="18.4" height="12.8" fill="#fcd566"/><path d="M478.2 730.3V723.5H490.6V730.3H487.4V726.5H481.4V730.3Z" fill="#3a8fdd"/>
<path d="M514.2 718.3H534.8V731.9Q534.8 732.9 533.8 732.9H515.2Q514.2 732.9 514.2 731.9Z" fill="#2b2b2b"/><path d="M519.6 718.3V714.9Q519.6 713.3 521.2 713.3H527.8Q529.4 713.3 529.4 714.9V718.3" fill="none" stroke="#2b2b2b" stroke-width="1.6"/><rect x="520.2" y="722.3" width="3.8" height="3.8" fill="#f35325"/><rect x="525" y="722.3" width="3.8" height="3.8" fill="#81bc06"/><rect x="520.2" y="727.1" width="3.8" height="3.8" fill="#05a6f0"/><rect x="525" y="727.1" width="3.8" height="3.8" fill="#ffba08"/>
<path d="M554.4 720.9L564.6 713.9L574.8 720.9V731.9H554.4Z" fill="#1784d6"/><path d="M554.4 721.5L564.6 727.9L574.8 721.5V720.9L564.6 714.5L554.4 720.9Z" fill="#0f62ad"/><path d="M556.4 721.3H572.8L564.6 726.9Z" fill="#f4f8fc"/><path d="M554.4 731.9L564.6 725.5L574.8 731.9Z" fill="#3fa9f2"/>
<path d="M594.0 717.6999999999999L599.4 714.3L604.8 717.6999999999999L599.4 721.0999999999999Z" fill="#111"/>
<path d="M604.6 717.6999999999999L610 714.3L615.4 717.6999999999999L610 721.0999999999999Z" fill="#111"/>
<path d="M594.0 724.3L599.4 720.9L604.8 724.3L599.4 727.6999999999999Z" fill="#111"/>
<path d="M604.6 724.3L610 720.9L615.4 724.3L610 727.6999999999999Z" fill="#111"/>
<path d="M599.7 730.3L604.7 727.3L609.7 730.3L604.7 733.3Z" fill="#111"/>
<circle cx="643.6" cy="722.9" r="9.6" fill="#e94435"/><path d="M643.6 722.9L635.3 718.1A9.6 9.6 0 0 0 643 732.5L647.8 724.5Z" fill="#33a852"/><path d="M643.6 722.9L647.8 725.3L643 732.5A9.6 9.6 0 0 0 652 718.3H643.6Z" fill="#fbbd05"/><circle cx="643.6" cy="722.9" r="4.5" fill="#fff"/><circle cx="643.6" cy="722.9" r="3.5" fill="#4285f4"/>
<rect x="628" y="737.0999999999999" width="32" height="2.2" fill="#2f7fd6"/>
<circle cx="684.6" cy="722.9" r="9.3" fill="#ed6c47"/><path d="M684.6 713.6A9.3 9.3 0 0 1 693.9 722.9H684.6Z" fill="#ff8f6b"/><path d="M675.3 722.9H693.9A9.3 9.3 0 0 1 675.3 722.9Z" fill="#d35230"/><rect x="673" y="717.6999999999999" width="10.2" height="10.4" rx="1" fill="#c43e1c"/>
<rect x="715" y="713.3" width="14.6" height="19.4" rx="1" fill="#6a7684"/><rect x="716.8" y="715.1" width="11" height="4.6" fill="#5fd0f5"/>
<rect x="716.8" y="721.3" width="3" height="2.8" fill="#e8ecf0"/>
<rect x="720.6" y="721.3" width="3" height="2.8" fill="#e8ecf0"/>
<rect x="724.4" y="721.3" width="3" height="2.8" fill="#e8ecf0"/>
<rect x="716.8" y="724.9" width="3" height="2.8" fill="#e8ecf0"/>
<rect x="720.6" y="724.9" width="3" height="2.8" fill="#e8ecf0"/>
<rect x="724.4" y="724.9" width="3" height="2.8" fill="#1c4f9c"/>
<rect x="716.8" y="728.5" width="3" height="2.8" fill="#e8ecf0"/>
<rect x="720.6" y="728.5" width="3" height="2.8" fill="#e8ecf0"/>
<rect x="724.4" y="728.5" width="3" height="2.8" fill="#1c4f9c"/>
<rect x="752" y="712.9" width="20" height="20" fill="#0d2d5c"/><path d="M757 717.5Q757 716.3 758.4 716.3H761.4V726.9L757 723.9ZM762.6 716.3H765.6Q767 716.3 767 717.5V723.9L762.6 726.9ZM757.4 725.5L762 729.3L766.6 725.5" fill="none" stroke="#2aa4e8" stroke-width="1.2"/>
<circle cx="801.3" cy="722.9" r="9.8" fill="#5fbf8a"/><circle cx="801.3" cy="722.9" r="9.8" fill="none" stroke="#8fd9b0" stroke-width="1.2"/><ellipse cx="801.3" cy="722.9" rx="2.8" ry="7" fill="none" stroke="#e9f7ef" stroke-width="0.9"/><ellipse cx="801.3" cy="722.9" rx="2.8" ry="7" fill="none" stroke="#e9f7ef" stroke-width="0.9" transform="rotate(60 801.3 722.9)"/><ellipse cx="801.3" cy="722.9" rx="2.8" ry="7" fill="none" stroke="#e9f7ef" stroke-width="0.9" transform="rotate(-60 801.3 722.9)"/>
<circle cx="840.7" cy="722.9" r="9.8" fill="#1ed760"/><path d="M834.6 719.5Q841 717.3 847.4 720.5" fill="none" stroke="#111" stroke-width="2" stroke-linecap="round"/><path d="M835.2 723.3Q841 721.5 846.4 724.1" fill="none" stroke="#111" stroke-width="1.7" stroke-linecap="round"/><path d="M836 726.6999999999999Q841 725.3 845.4 727.3" fill="none" stroke="#111" stroke-width="1.4" stroke-linecap="round"/>
<circle cx="880" cy="722.9" r="9.8" fill="#5865f2"/><path d="M874.4 719.5Q877 718.1 880 718.3Q883 718.1 885.6 719.5Q887.6 722.9 887.4 726.3Q885.6 727.6999999999999 884 727.6999999999999L883.2 726.5H876.8L876 727.6999999999999Q874.4 727.6999999999999 872.6 726.3Q872.4 722.9 874.4 719.5Z" fill="#fff"/><ellipse cx="877.6" cy="723.5" rx="1.3" ry="1.5" fill="#5865f2"/><ellipse cx="882.4" cy="723.5" rx="1.3" ry="1.5" fill="#5865f2"/>
<circle cx="920" cy="716.9" r="3.2" fill="#5059c9"/><circle cx="926.6" cy="718.1" r="2.4" fill="#7b83eb"/><path d="M915 720.9H925.4V727.5Q925 731.5 920.4 731.6999999999999Q915.6 731.5 915 727.5Z" fill="#5059c9"/><path d="M925.4 721.3H930.2V725.9Q930 728.9 927.4 729.3Q925.8 729.1 925.4 727.9Z" fill="#7b83eb"/><rect x="908.6" y="718.3" width="10.8" height="10.8" rx="1" fill="#4b53bc"/><circle cx="925.6" cy="729.3" r="3" fill="#6cc24a" stroke="#fff" stroke-width="0.6"/>
<rect x="903" y="737.0999999999999" width="32" height="2.2" fill="#2f7fd6"/>
<rect x="939.3" y="706.6" width="38.6" height="32.7" fill="#f8efee"/>
<rect x="949.6" y="712.9" width="17.6" height="19" rx="1" fill="#fbdcc2"/><path d="M953.6 715.3H963.4V718.5H957.4V721.3H962.4V724.5H957.4V728.9H953.6Z" fill="#e8862d"/><path d="M957.4 724.5H962.4V726.9H965V729.5H957.4Z" fill="#c8651a" opacity=".5"/>
<rect x="939.3" y="737.0999999999999" width="38.6" height="2.2" fill="#2f7fd6"/>
<g transform="translate(3.4 0)"><circle cx="1003.6" cy="718.9" r="4" fill="#f7c325"/><path d="M1001.4 728.5Q998 728.3 998 725.5Q998.4 722.9 1001.2 722.9Q1002.4 719.3 1006 719.5Q1009.4 719.9 1010 722.9Q1014 722.6999999999999 1014.4 725.9Q1014 728.5 1011 728.5Z" fill="#cfe3f4" stroke="#a9c8e4" stroke-width="0.5"/></g>
<path d="M1065.6 725.3L1070.5 720.3L1075.4 725.3" fill="none" stroke="#222" stroke-width="1.2"/>
<path d="M1085 721.1H1087.2L1090 718.5V727.3L1087.2 724.6999999999999H1085Z" fill="none" stroke="#333" stroke-width="0.9"/><path d="M1092 720.9Q1093.4 722.9 1092 724.9M1093.8 719.3Q1096 722.9 1093.8 726.5M1095.8 717.9Q1098.8 722.9 1095.8 727.9" fill="none" stroke="#333" stroke-width="0.8"/>
<rect x="1107" y="718.3" width="6.8" height="9.6" rx="1.6" fill="none" stroke="#333" stroke-width="0.9"/><path d="M1113.8 721.5L1116.2 719.9V725.9L1113.8 724.3M1109 716.9H1112M1109 729.5H1112" fill="none" stroke="#333" stroke-width="0.9"/>
<rect x="1124.6" y="719.6999999999999" width="11.6" height="6.6" fill="none" stroke="#222" stroke-width="1"/><rect x="1125.6" y="720.6999999999999" width="3.6" height="4.6" fill="#222"/><rect x="1136.4" y="721.6999999999999" width="1.2" height="2.6" fill="#222"/>
<path d="M1146 718.1H1157.6V725.6999999999999H1149M1152 725.6999999999999V728.1M1149.4 728.3H1155" fill="none" stroke="#222" stroke-width="1"/><rect x="1144" y="721.1" width="4" height="7" fill="#e7e0e6" stroke="#222" stroke-width="0.9"/>
<path d="M1260.4 717.3H1275.6V727.3H1270L1268 729.6999999999999L1266 727.3H1260.4Z" fill="none" stroke="#222" stroke-width="1.1"/>
</svg>
<div id="txt">
<span class="t" style="left:40.20px;top:26.83px;font-size:11px;line-height:13.20px;color:#111;transform:scaleX(0.8823);-webkit-text-stroke:0.1px currentColor;">Autodesk Fusion 360 (Licencia educativa)</span>
<span class="t" style="left:43.20px;top:52.37px;font-size:12.8px;line-height:15.36px;color:#787878;transform:scaleX(0.9150);">Miguel Angel Guzman Huaman</span>
<span class="t" style="left:89.80px;top:88.92px;font-size:10.5px;line-height:12.60px;color:#666;transform:scaleX(0.9443);">Datos</span>
<span class="t" style="left:226.40px;top:88.92px;font-size:10.5px;line-height:12.60px;color:#666;transform:scaleX(0.9333);">Personas</span>
<span class="t" style="left:169.40px;top:119.63px;font-size:11px;line-height:13.20px;color:#ffffff;transform:scaleX(0.9137);font-weight:bold;">Cargar</span>
<span class="t" style="left:224.30px;top:119.63px;font-size:11px;line-height:13.20px;color:#707070;transform:scaleX(0.9058);">Nueva carpeta</span>
<span class="t" style="left:61.80px;top:151.72px;font-size:10.5px;line-height:12.60px;color:#666;transform:scaleX(0.9451);">Nuevo proyecto</span>
<span class="t" style="left:148.10px;top:151.72px;font-size:10.5px;line-height:12.60px;color:#555;transform:scaleX(0.9544);font-weight:bold;">instructable</span>
<span class="t" style="left:109.20px;top:177.03px;font-size:11.5px;line-height:13.80px;color:#4a4a4a;transform:scaleX(0.9574);font-weight:bold;">CARA A</span>
<span class="t" style="left:92.40px;top:194.42px;font-size:10px;line-height:12.00px;color:#9a9a9a;transform:scaleX(0.9864);">11:49:46 PM</span>
<span class="t" style="left:297.60px;top:212.99px;font-size:8px;line-height:9.60px;color:#666;transform:scaleX(0.8993);">V1</span>
<span class="t" style="left:795.80px;top:54.63px;font-size:11px;line-height:13.20px;color:#555;transform:scaleX(0.8995);">Sin título</span>
<span class="t" style="left:1266.80px;top:54.40px;font-size:8.5px;line-height:10.20px;color:#8a8a9a;transform:scaleX(0.8472);">MG</span>
<span class="t" style="left:1235.60px;top:53.42px;font-size:10.5px;line-height:12.60px;color:#d6d6d6;transform:scaleX(0.8419);font-weight:bold;">?</span>
<span class="t" style="left:478.00px;top:77.10px;font-size:9px;line-height:10.80px;color:#1b93d6;transform:scaleX(0.8615);clip-path:inset(38% 0 0 0);">SÓLIDO</span>
<span class="t" style="left:550.20px;top:76.60px;font-size:9px;line-height:10.80px;color:#555;transform:scaleX(0.8425);">SUPERFICIE</span>
<span class="t" style="left:636.00px;top:76.60px;font-size:9px;line-height:10.80px;color:#555;transform:scaleX(1.0131);">MALLA</span>
<span class="t" style="left:705.10px;top:76.60px;font-size:9px;line-height:10.80px;color:#555;transform:scaleX(0.9558);">CHAPA</span>
<span class="t" style="left:774.40px;top:76.60px;font-size:9px;line-height:10.80px;color:#555;transform:scaleX(0.9119);">HERRAMIENTAS</span>
<span class="t" style="left:387.00px;top:100.70px;font-size:9px;line-height:10.80px;color:#444;transform:scaleX(0.8984);font-weight:bold;">DISEÑO</span>
<span class="t" style="left:549.80px;top:127.70px;font-size:9px;line-height:10.80px;color:#555;transform:scaleX(0.8951);">CREAR</span>
<span class="t" style="left:746.80px;top:127.70px;font-size:9px;line-height:10.80px;color:#555;transform:scaleX(0.9109);">MODIFICAR</span>
<span class="t" style="left:880.40px;top:127.70px;font-size:9px;line-height:10.80px;color:#555;transform:scaleX(0.9547);">ENSAMBLAR</span>
<span class="t" style="left:966.30px;top:127.70px;font-size:9px;line-height:10.80px;color:#555;transform:scaleX(0.8897);">CONSTRUIR</span>
<span class="t" style="left:1044.40px;top:127.70px;font-size:9px;line-height:10.80px;color:#555;transform:scaleX(0.8904);">INSPECCIONAR</span>
<span class="t" style="left:1135.90px;top:127.70px;font-size:9px;line-height:10.80px;color:#555;transform:scaleX(0.9133);">INSERTAR</span>
<span class="t" style="left:1205.50px;top:127.70px;font-size:9px;line-height:10.80px;color:#555;transform:scaleX(0.9067);">SELECCIONAR</span>
<span class="t" style="left:376.00px;top:149.10px;font-size:9px;line-height:10.80px;color:#777;transform:scaleX(0.9728);">NAVEGADOR</span>
<span class="t" style="left:433.30px;top:171.91px;font-size:9.5px;line-height:11.40px;color:#ffffff;transform:scaleX(1.0082);font-weight:bold;">(Sin guardar)</span>
<span class="t" style="left:427.60px;top:192.10px;font-size:9px;line-height:10.80px;color:#484848;transform:scaleX(0.9985);">Configuración del documento</span>
<span class="t" style="left:427.60px;top:212.10px;font-size:9px;line-height:10.80px;color:#484848;transform:scaleX(1.0320);">Vistas guardadas</span>
<span class="t" style="left:448.90px;top:232.20px;font-size:9px;line-height:10.80px;color:#484848;transform:scaleX(0.9810);">Origen</span>
<span class="t" style="left:376.30px;top:651.10px;font-size:9px;line-height:10.80px;color:#777;transform:scaleX(0.9120);">COMENTARIOS</span>
<span class="t" style="left:865.00px;top:411.00px;font-size:8.5px;line-height:10.20px;color:#222;transform:scaleX(0.9843);">Seleccionar un plano o una cara plana</span>
<span class="t" style="left:88.90px;top:716.35px;font-size:13px;line-height:15.60px;color:#4a4a4a;transform:scaleX(0.9514);-webkit-text-stroke:0.1px currentColor;">Escribe aquí para buscar</span>
<span class="t" style="left:1026.60px;top:717.14px;font-size:12px;line-height:14.40px;color:#222;transform:scaleX(0.9249);">16°C</span>
<span class="t" style="left:1167.00px;top:718.61px;font-size:9.5px;line-height:11.40px;color:#222;transform:scaleX(0.8733);">ESP</span>
<span class="t" style="left:1209.40px;top:709.52px;font-size:10.5px;line-height:12.60px;color:#222;transform:scaleX(0.8601);">23:51</span>
<span class="t" style="left:1199.00px;top:725.22px;font-size:10.5px;line-height:12.60px;color:#222;transform:scaleX(0.9420);">2/09/2021</span>
<span class="t" style="left:917.83px;top:451.45px;font-size:7.5px;line-height:9.00px;color:#9a9a9a;font-style:italic;transform-origin:50% 50%;transform:rotate(-76deg)">50</span>
<span class="t" style="left:970.53px;top:481.88px;font-size:7.5px;line-height:9.00px;color:#9a9a9a;font-style:italic;transform-origin:50% 50%;transform:rotate(-76deg)">75</span>
<span class="t" style="left:1021.14px;top:512.31px;font-size:7.5px;line-height:9.00px;color:#9a9a9a;font-style:italic;transform-origin:50% 50%;transform:rotate(-76deg)">100</span>
<span class="t" style="left:1073.84px;top:542.73px;font-size:7.5px;line-height:9.00px;color:#9a9a9a;font-style:italic;transform-origin:50% 50%;transform:rotate(-76deg)">125</span>
<span class="t" style="left:823.93px;top:472.95px;font-size:7.5px;line-height:9.00px;color:#9a9a9a;font-style:italic;transform-origin:50% 50%;transform:rotate(-80deg)">25</span>
<span class="t" style="left:823.93px;top:533.81px;font-size:7.5px;line-height:9.00px;color:#9a9a9a;font-style:italic;transform-origin:50% 50%;transform:rotate(-80deg)">50</span>
<span class="t" style="left:823.93px;top:594.66px;font-size:7.5px;line-height:9.00px;color:#9a9a9a;font-style:italic;transform-origin:50% 50%;transform:rotate(-80deg)">75</span>
<span class="t" style="left:1231.2px;top:170px;font-size:5.4px;line-height:7px;color:#7c7c7c;-webkit-text-stroke:0;transform-origin:50% 50%;transform:matrix(0.86,0.44,-0.9,0.42,0,0)">SUPERIOR</span>
<span class="t" style="left:1222.6px;top:192px;font-size:5.6px;line-height:7px;color:#7c7c7c;-webkit-text-stroke:0;transform-origin:50% 50%;transform:matrix(0.8,0.5,0,1.25,0,0)">FRONTAL</span>
<span class="t" style="left:1246px;top:191px;font-size:5.4px;line-height:7px;color:#7c7c7c;-webkit-text-stroke:0;transform-origin:50% 50%;transform:matrix(0.78,-0.46,0,1.25,0,0)">DERECHA</span>
<span class="t" style="left:1213.8px;top:156.6px;font-size:11px;line-height:13px;color:#7474f4;font-weight:bold">Z</span>
<span class="t" style="left:1250.6px;top:219.6px;font-size:11px;line-height:13px;color:#f58c8c;font-weight:bold">X</span>
<span class="t" style="left:675.6px;top:718.2px;font-size:8px;line-height:10px;color:#fff;font-weight:bold">P</span>
<span class="t" style="left:911.6px;top:719.2px;font-size:8px;line-height:10px;color:#fff;font-weight:bold">T</span>
</div>
<svg width="1312" height="757" viewBox="0 0 1312 757">
<path d="M457.9 70.4Q458.4 100 455.6 131.2" fill="none" stroke="#e8161e" stroke-width="2.9" stroke-linecap="round"/><path d="M458.6 80Q485 79 507.6 79.3Q510.2 79.6 510 84Q509 100 510.4 122.8" fill="none" stroke="#e8161e" stroke-width="2.9" stroke-linecap="round"/><path d="M460.2 126.8Q480 131 500.6 130.8Q503.5 130.6 506.4 128.6L522 116.2" fill="none" stroke="#e8161e" stroke-width="2.9" stroke-linecap="round"/>
</svg>
</div>
</body></html>
